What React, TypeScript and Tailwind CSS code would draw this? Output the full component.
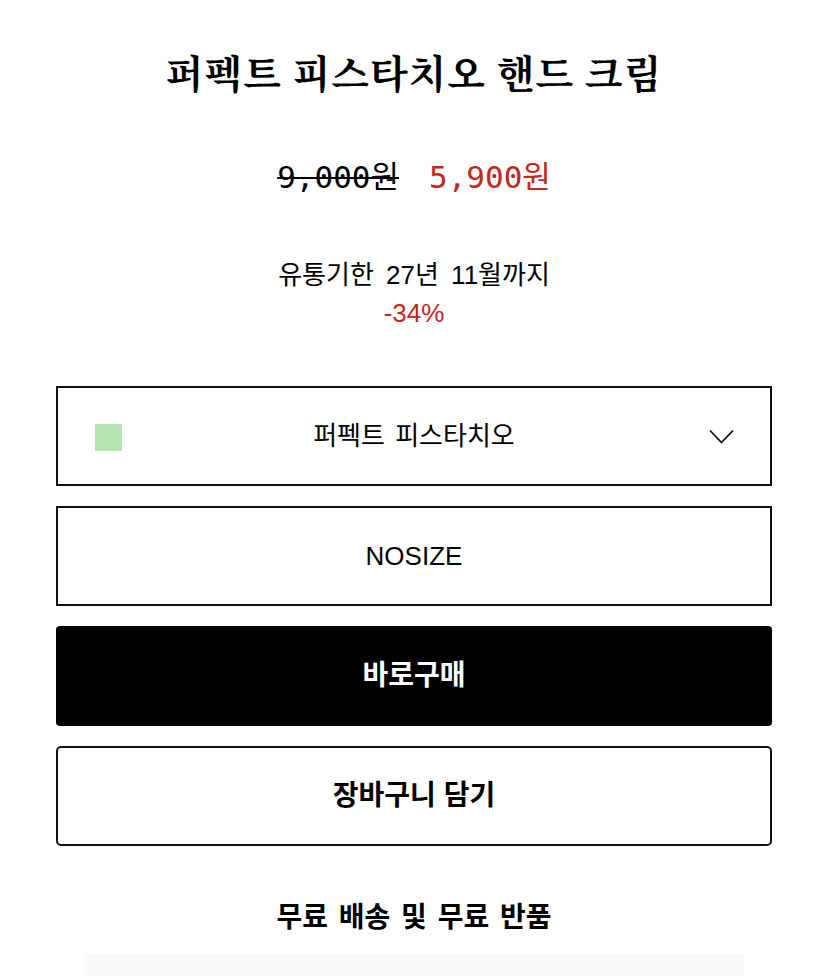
const sans = { fontFamily: '"Liberation Sans", "Noto Sans CJK KR", sans-serif' };
const mono = { fontFamily: '"DejaVu Sans Mono", "Noto Sans CJK KR", monospace' };
const serif = { fontFamily: '"Liberation Serif", "Noto Serif CJK KR", "Noto Sans CJK KR", serif' };

function Chevron() {
  return (
    <svg className="absolute right-[36px] top-[41px]" width="25" height="15" viewBox="0 0 25 15" fill="none">
      <polyline points="1,1.5 12.5,13.5 24,1.5" stroke="#111" strokeWidth="1.8" />
    </svg>
  );
}

export default function App() {
  return (
    <div className="w-[828px] h-[976px] overflow-hidden bg-white text-black" style={sans}>
      <div className="flex flex-col items-center px-[56px] pt-[49px]">
        <h1 className="text-[39px] leading-[52px] font-bold tracking-[1px]" style={serif}>
          퍼펙트 피스타치오 핸드 크림
        </h1>

        <div className="mt-[56px] flex items-center gap-[30px] text-[31px] leading-[40px]" style={mono}>
          <span className="line-through decoration-2">9,000원</span>
          <span className="text-[#c1281e]">5,900원</span>
        </div>

        <div className="mt-[61px] text-[26px] leading-[34px] [word-spacing:5px]">유통기한 27년 11월까지</div>
        <div className="mt-[4px] text-[26px] leading-[34px] text-[#c1281e]">-34%</div>

        <div className="mt-[56px] w-full flex flex-col gap-[20px]">
          <button className="relative h-[100px] w-full border-2 border-[#111] flex items-center justify-center">
            <span className="absolute left-[37px] top-[36px] w-[27px] h-[27px] bg-[#b5e5b0]" />
            <span className="text-[26px] [word-spacing:3px]">퍼펙트 피스타치오</span>
            <Chevron />
          </button>
          <button className="h-[100px] w-full border-2 border-[#111] flex items-center justify-center text-[26px]">
            NOSIZE
          </button>
          <button className="h-[100px] w-full rounded-[4px] bg-black text-white flex items-center justify-center text-[28px] font-bold">
            바로구매
          </button>
          <button className="h-[100px] w-full rounded-[5px] border-2 border-[#111] flex items-center justify-center text-[28px] font-bold">
            장바구니 담기
          </button>
        </div>

        <div className="mt-[54px] text-[28px] leading-[36px] font-bold [word-spacing:3px]">무료 배송 및 무료 반품</div>
        <div className="mt-[18px] w-[660px] h-[40px] bg-[#fafafa]" />
      </div>
    </div>
  );
}
